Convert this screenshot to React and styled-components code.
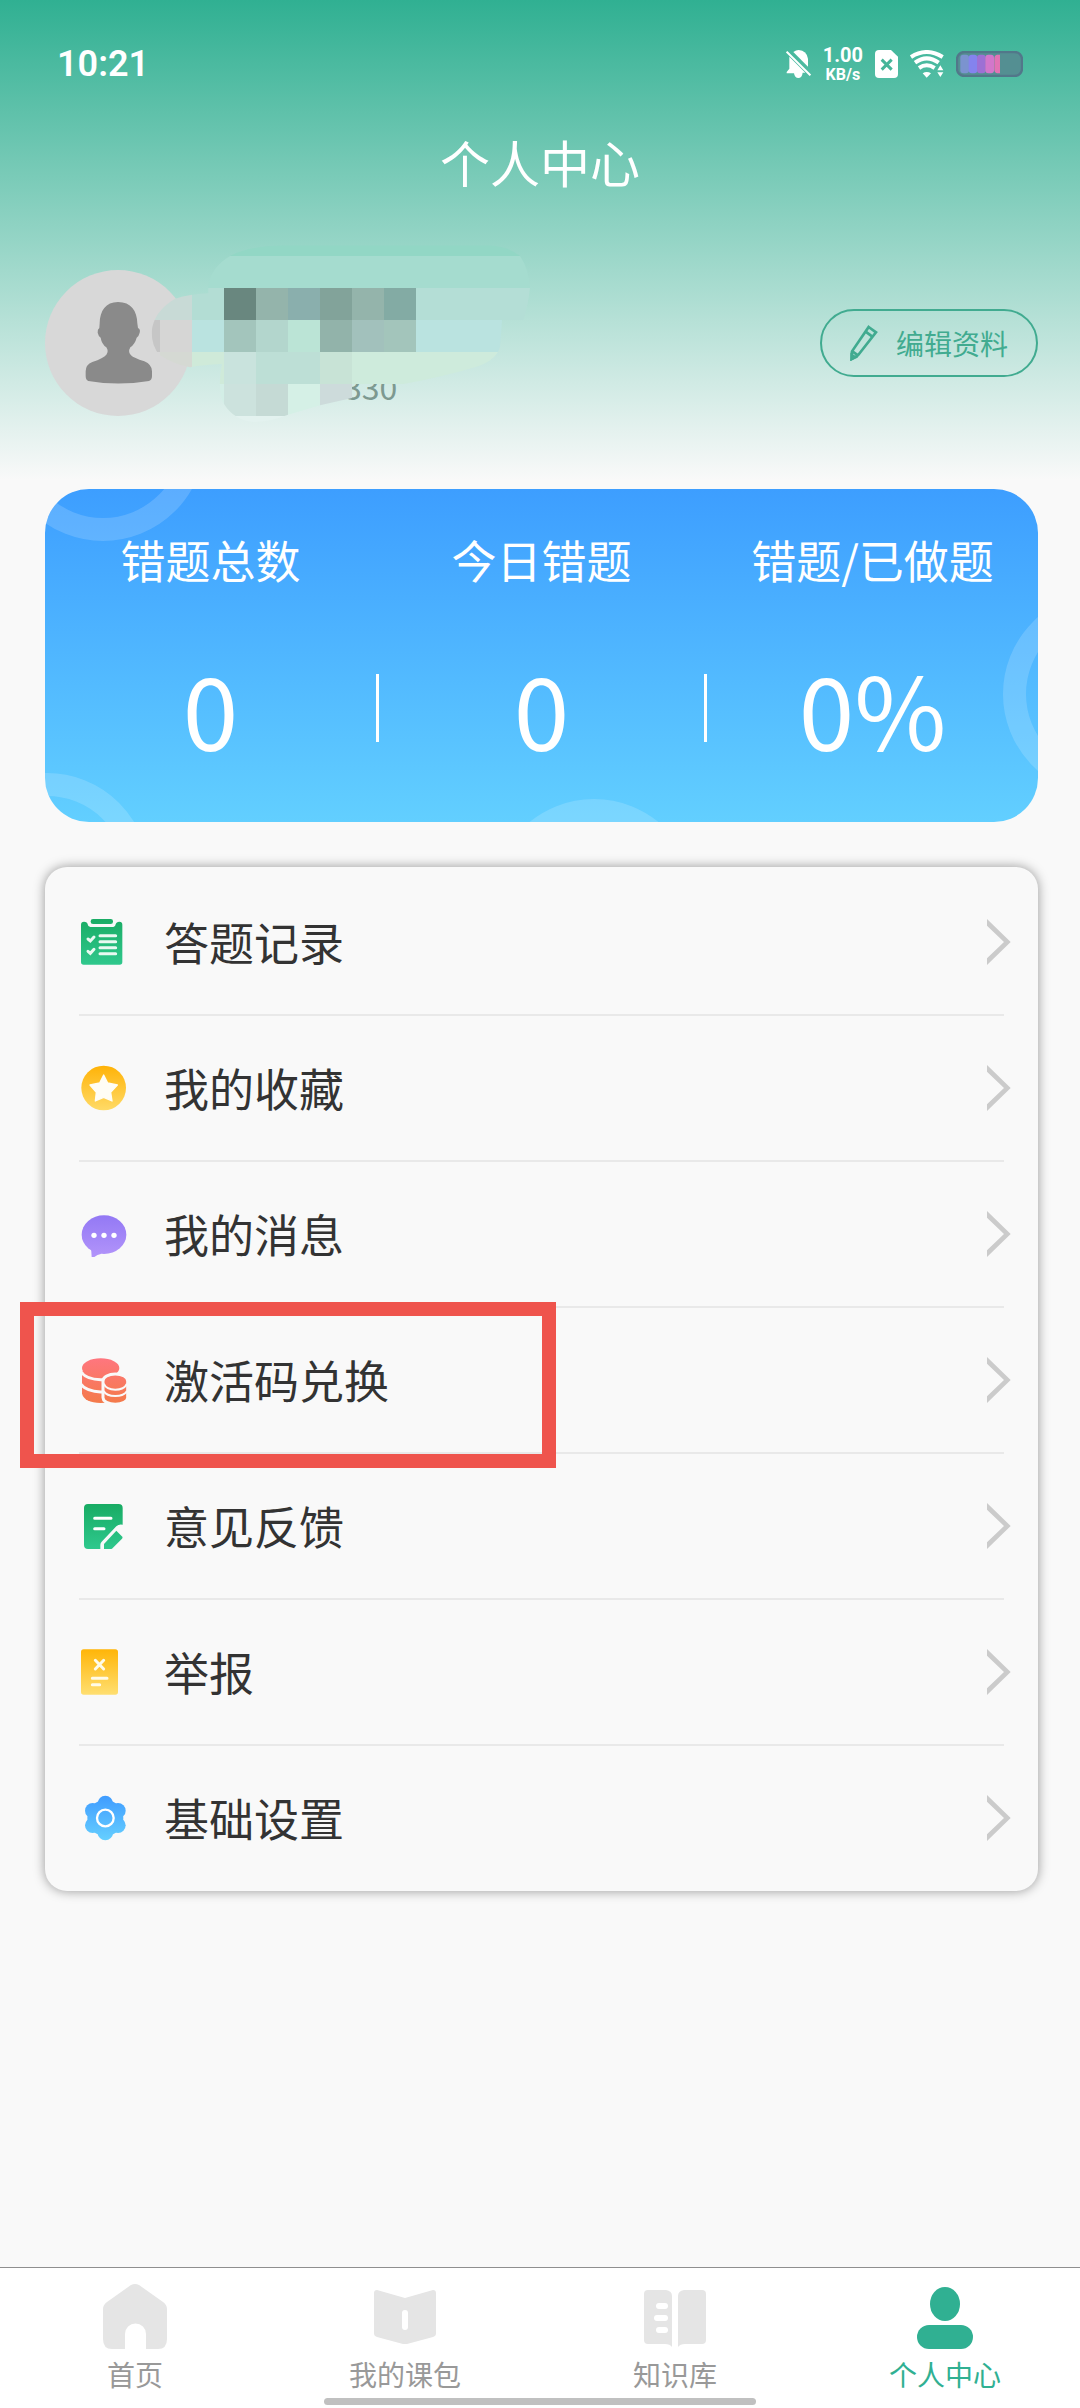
import React from "react";
import styled, { createGlobalStyle } from "styled-components";

const GlobalStyle = createGlobalStyle`
  * {
    box-sizing: border-box;
  }

  body {
    margin: 0;
    background: #f9f9f9;
    color: #333;
    font-family: "Noto Sans CJK SC", "Noto Sans", sans-serif;
  }
`;

const Page = styled.div`
  min-height: 100vh;
  display: flex;
  flex-direction: column;
  background: linear-gradient(#30b092, #f9f9f9 480px) #f9f9f9;
`;

const StatusBar = styled.div`
  height: 128px;
  padding: 0 57px;
  display: flex;
  align-items: center;
  justify-content: space-between;
  color: #fff;
  font-family: Roboto, sans-serif;
`;

const Time = styled.span`
  font-size: 36px;
  line-height: 48px;
  font-weight: 600;
`;

const StatusIcons = styled.div`
  display: flex;
  align-items: center;
  gap: 12px;
`;

const Speed = styled.span`
  font-size: 20px;
  font-weight: 700;
  line-height: 22px;
  text-align: center;

  small {
    display: block;
    font-size: 16px;
    line-height: 18px;
  }
`;

const Title = styled.h1`
  margin: 0;
  font-size: 50px;
  font-weight: 400;
  line-height: 66px;
  text-align: center;
  color: #fff;
`;

const Profile = styled.section`
  position: relative;
  display: flex;
  align-items: center;
  justify-content: space-between;
  margin: 76px 42px 73px 45px;
`;

const Avatar = styled.div`
  width: 146px;
  height: 146px;
  border-radius: 50%;
  background: #d8d8d8;

  svg {
    display: block;
  }
`;

const UserId = styled.span`
  flex: 1;
  padding: 86px 0 0 153px;
  font-size: 32px;
  line-height: 48px;
  color: #7d9990;
`;

const Smudge = styled.svg`
  position: absolute;
  left: -15px;
  top: -30px;
`;

const EditButton = styled.button`
  width: 218px;
  height: 68px;
  padding: 0 28px;
  display: flex;
  align-items: center;
  justify-content: space-between;
  border: 2px solid #41ab90;
  border-radius: 34px;
  background: transparent;
  color: #41ab90;
  font-family: inherit;
  font-size: 28px;
  line-height: 40px;
`;

const StatCard = styled.section`
  position: relative;
  overflow: hidden;
  margin: 0 42px 45px 45px;
  padding: 39px 0 62px;
  display: grid;
  grid-template-columns: repeat(3, 1fr);
  border-radius: 44px;
  background: linear-gradient(#3d9eff, #62cfff);
  color: #fff;
  text-align: center;
`;

const Ring = styled.span`
  position: absolute;
  left: ${(props) => props.$left};
  top: ${(props) => props.$top};
  width: 204px;
  height: 204px;
  border: 23px solid rgba(255, 255, 255, 0.16);
  border-radius: 50%;
`;

const Stat = styled.div`
  position: relative;
`;

const StatLabel = styled.div`
  margin-bottom: 64px;
  font-size: 45px;
  line-height: 64px;
`;

const StatValue = styled.div`
  height: 104px;
  display: flex;
  align-items: center;
  justify-content: center;
  font-size: 100px;
  line-height: 104px;

  &:before,
  &:after {
    content: "";
    width: 3px;
    height: 68px;
    background: ${(props) => (props.$divided ? "#fff" : "transparent")};
  }

  span {
    flex: 1;
  }
`;

const Menu = styled.ul`
  margin: 0 42px 45px 45px;
  padding: 3px 0 1px;
  list-style: none;
  border-radius: 22px;
  background: #f9f9f9;
  box-shadow: 0 0 12px rgba(0, 0, 0, 0.4);
`;

const MenuItem = styled.li`
  position: relative;

  &:after {
    content: "";
    display: block;
    height: 2px;
    margin: 0 34px;
    background: #e9e9e9;
  }

  &:last-child:after {
    display: none;
  }
`;

const MenuLink = styled.a`
  height: 144px;
  padding: 0 27px 0 36px;
  display: flex;
  align-items: center;
  color: inherit;
  font-size: 45px;
  line-height: 64px;
  text-decoration: none;

  span {
    flex: 1;
    margin-left: 37px;
  }
`;

const Highlight = styled.div`
  position: absolute;
  left: -25px;
  top: -6px;
  width: 536px;
  height: 166px;
  border: 14px solid #ef544d;
  z-index: 1;
  pointer-events: none;
`;

const TabBar = styled.nav`
  margin-top: auto;
  padding-bottom: 3px;
  border-top: 1px solid #8f8f8f;
  background: #fff;
`;

const Tabs = styled.div`
  display: grid;
  grid-template-columns: repeat(4, 1fr);
`;

const Tab = styled.a`
  padding-top: 16px;
  display: flex;
  flex-direction: column;
  align-items: center;
  color: ${(props) => (props.$active ? "#30b092" : "#999")};
  font-size: 28px;
  line-height: 40px;
  text-decoration: none;

  svg {
    margin-bottom: 4px;
    fill: ${(props) => (props.$active ? "#30b092" : "#e5e5e5")};
  }
`;

const HomeIndicator = styled.div`
  width: 40%;
  height: 7px;
  margin: 4px auto 0;
  border-radius: 4px;
  background: #c0c0c0;
`;

const BellOffIcon = () => (
  <svg width="25" height="28" viewBox="0 0 75 84" fill="#fff">
    <path d="M22 6Q30 0 38 0Q62 2 66 26V50L22 6Z" />
    <path d="M10 20L58 68H50Q48 84 37 84Q26 84 24 70H2V66L10 56Z" />
    <path d="M2 5L73 76" stroke="#fff" strokeWidth="6" />
  </svg>
);

const SimOffIcon = () => (
  <svg width="23" height="28" viewBox="0 0 69 84">
    <path d="M12 0H48L69 20V72Q69 84 57 84H12Q0 84 0 72V12Q0 0 12 0Z" fill="#fff" />
    <path d="M20 29L50 59M50 29L20 59" stroke="#45b599" strokeWidth="9" />
  </svg>
);

const WifiIcon = () => (
  <svg width="34" height="28" viewBox="0 0 102 84" fill="none" stroke="#fff" strokeWidth="12">
    <path d="M3 21Q50 -9 98 21" />
    <path d="M15 38Q50 12 86 38" />
    <path d="M27 54Q50 38 74 54" />
    <path d="M38 70Q50 62 63 70L50 83Z" fill="#fff" stroke="none" />
    <path d="M82 61L91 46L100 61ZM82 67L91 81L100 67Z" fill="#fff" stroke="none" />
  </svg>
);

const BatteryIcon = () => (
  <svg width="67" height="26" viewBox="0 0 201 78">
    <rect x="3" y="3" width="195" height="72" rx="22" fill="#548f92" stroke="#52778a" strokeWidth="7" />
    <rect x="13" y="11" width="26" height="56" rx="9" fill="#7b93cf" />
    <rect x="38" y="11" width="26" height="56" rx="9" fill="#8483ee" />
    <rect x="63" y="11" width="26" height="56" rx="9" fill="#9d70d4" />
    <rect x="88" y="11" width="26" height="56" rx="9" fill="#d277cb" />
    <path d="M123 11h9v56h-9q-8-2-8-12V23q0-10 8-12z" fill="#e273b4" />
  </svg>
);

const PersonIcon = () => (
  <svg width="146" height="146" viewBox="0 0 438 438" fill="#8a8a8a">
    <path d="M219 96C258 96 276 122 277 160L279 174Q287 178 284 188Q281 200 275 203Q270 222 256 232Q248 246 258 256Q266 264 298 274Q321 284 321 304V318Q321 330 312 333Q219 348 130 333Q122 330 122 318V304Q122 284 142 276Q176 264 184 254Q192 244 184 232Q170 222 167 203Q160 198 158 188Q157 178 163 174L164 160C165 122 182 96 219 96Z" />
  </svg>
);

const PencilIcon = () => (
  <svg width="28" height="36" viewBox="0 0 84 108" fill="none" stroke="#41ab90" strokeWidth="8">
    <path d="M56 6L78 22L24 91L5 102L6 79Z" />
    <path d="M47 20L67 35M7 79L24 91" />
    <path d="M5 90L16 97L5 102Z" fill="#41ab90" />
  </svg>
);

// [x, y, width, colour] of each mosaic block, one block is 96 high
const blocks = [
  [500, -48, 1060, "#92d7c5"],
  [500, 48, 1060, "#a5dccf"],
  [300, 144, 90, "#c8dad6"],
  [390, 144, 96, "#c8dad6"],
  [486, 144, 96, "#b3ddd4"],
  [582, 144, 96, "#69877f"],
  [678, 144, 96, "#94b4ab"],
  [774, 144, 96, "#8aafad"],
  [870, 144, 96, "#82a39a"],
  [966, 144, 96, "#94b4ab"],
  [1062, 144, 96, "#83aba4"],
  [1158, 144, 400, "#b4ded6"],
  [300, 240, 90, "#c6c6c6"],
  [390, 240, 96, "#d6d6d5"],
  [486, 240, 96, "#bae3e0"],
  [582, 240, 96, "#a3c5bc"],
  [678, 240, 96, "#b3d6cd"],
  [774, 240, 96, "#bbe4d6"],
  [870, 240, 96, "#92b3aa"],
  [966, 240, 96, "#a2c1bc"],
  [1062, 240, 96, "#a3c5bb"],
  [1158, 240, 400, "#bae3e0"],
  [390, 336, 96, "#d5d9d3"],
  [486, 336, 96, "#cfead9"],
  [582, 336, 96, "#c9e3dd"],
  [678, 336, 192, "#bddfd6"],
  [870, 336, 96, "#c8e3d6"],
  [966, 336, 594, "#ceebdc"],
  [486, 432, 96, "#d3eee6"],
  [582, 432, 96, "#cce2dd"],
  [678, 432, 96, "#c5dad5"],
  [774, 432, 96, "#d5f0e6"],
  [870, 432, 96, "#cddbdb"],
  [486, 528, 400, "#e3f2ef"],
];

const NameSmudge = () => (
  <Smudge width="520" height="200" viewBox="0 0 1560 600" shapeRendering="crispEdges" aria-hidden="true">
    <clipPath id="smudge">
      <path d="M365 275Q370 215 435 176Q480 162 535 160Q530 90 600 48Q650 20 760 16H1380Q1440 22 1470 48Q1496 84 1500 144Q1494 200 1480 240H1416L1410 320Q1400 360 1340 380Q1240 410 1100 436L966 474L870 496L774 524Q720 546 670 546Q612 540 582 492Q560 450 576 372Q520 374 480 382Q430 372 390 346Q365 320 365 275Z" />
    </clipPath>
    <g clipPath="url(#smudge)">
      {blocks.map(([x, y, width, fill]) => (
        <rect key={`${x}-${y}`} x={x} y={y} width={width} height="96" fill={fill} />
      ))}
    </g>
  </Smudge>
);

const MenuIcon = ({ id, from, to, children }) => (
  <svg width="46" height="46" viewBox="0 0 138 138">
    <linearGradient id={id} gradientUnits="userSpaceOnUse" x1="0" y1="0" x2="0" y2="138">
      <stop stopColor={from} />
      <stop offset="1" stopColor={to} />
    </linearGradient>
    <g fill={`url(#${id})`}>{children}</g>
  </svg>
);

const RecordIcon = () => (
  <MenuIcon id="record" from="#1aac65" to="#30c88d">
    <rect x="29" y="0" width="67" height="15" rx="7" />
    <path d="M0 17Q0 8 9 8Q19 8 20 16Q21 24 28 24H97Q103 24 104 16Q106 8 115 8Q124 8 124 17V129Q124 137 116 137H8Q0 137 0 129Z" />
    <path
      d="M57 50H104M57 68H104M57 86H104M57 104H104M21 60L28 66L39 54M21 97L28 103L39 91"
      fill="none"
      stroke="#e9f9f1"
      strokeWidth="9"
      strokeLinecap="round"
    />
  </MenuIcon>
);

const StarIcon = () => (
  <MenuIcon id="star" from="#ffb206" to="#ffdb68">
    <circle cx="68" cy="69" r="67" />
    <path
      d="M68 30L80 54L109 60L89 82L93 108L68 97L43 108L46 82L27 60L56 54Z"
      fill="#fffdf5"
      stroke="#fffdf5"
      strokeWidth="4"
      strokeLinejoin="round"
    />
  </MenuIcon>
);

const MessageIcon = () => (
  <MenuIcon id="message" from="#9076f4" to="#b294fa">
    <ellipse cx="69" cy="71" rx="67" ry="58" />
    <path d="M30 108L32 138Q36 142 40 138Q48 130 62 128Z" />
    <g fill="#fff">
      <circle cx="39" cy="73" r="8" />
      <circle cx="69" cy="73" r="8" />
      <circle cx="99" cy="73" r="8" />
    </g>
  </MenuIcon>
);

const CoinsIcon = () => (
  <MenuIcon id="coins" from="#ff7680" to="#f47a4a">
    <path d="M3 42H85V136Q72 138 59 138Q10 136 3 110Z" />
    <ellipse cx="59" cy="33" rx="56" ry="29" />
    <path
      d="M-2 42Q14 68 59 68H90M-2 80Q14 103 59 105H90"
      fill="none"
      stroke="#f9f9f9"
      strokeWidth="9"
    />
    <path
      d="M66 72A37 21 0 0 1 140 72V122A37 20 0 0 1 66 122Z"
      stroke="#f9f9f9"
      strokeWidth="9"
    />
    <path
      d="M68 80Q76 98 103 98Q130 98 138 80M68 102Q76 117 103 117Q130 117 138 102"
      fill="none"
      stroke="#f9f9f9"
      strokeWidth="6"
    />
  </MenuIcon>
);

const FeedbackIcon = () => (
  <MenuIcon id="feedback" from="#18ab63" to="#2fc88d">
    <path d="M21 3H113Q125 3 125 15V65Q114 62 106 70L62 116Q58 120 58 126V138H21Q9 138 9 126V15Q9 3 21 3Z" />
    <path d="M106 83L124 101Q126 104 123 107L93 137Q91 138 88 138H69V123Z" />
    <path d="M41 46H90M41 77H69" stroke="#fff" strokeWidth="9" strokeLinecap="round" />
  </MenuIcon>
);

const ReportIcon = () => (
  <MenuIcon id="report" from="#ffb507" to="#ffdf72">
    <rect x="0" y="1" width="111" height="136" rx="8" />
    <path
      d="M43 34L68 60M68 34L43 60M34 88H78M34 107H56"
      stroke="#fffbe9"
      strokeWidth="9"
      strokeLinecap="round"
    />
  </MenuIcon>
);

const SettingsIcon = () => (
  <MenuIcon id="settings" from="#3f9bff" to="#66d0ff">
    <circle cx="73" cy="69" r="54" />
    <circle cx="73" cy="25" r="23" />
    <circle cx="111" cy="47" r="23" />
    <circle cx="111" cy="91" r="23" />
    <circle cx="73" cy="113" r="23" />
    <circle cx="35" cy="91" r="23" />
    <circle cx="35" cy="47" r="23" />
    <circle cx="73" cy="69" r="25" fill="none" stroke="#fff" strokeWidth="7" />
  </MenuIcon>
);

const ChevronIcon = () => (
  <svg width="24" height="46" viewBox="0 0 72 138" fill="#cbcbcb">
    <path d="M0 0L71 69L0 138V118L51 69L0 20Z" />
  </svg>
);

const HomeIcon = () => (
  <svg width="64" height="66">
    <path d="M28 1Q32 -1 36 1L60 18Q64 21 64 25V55Q64 65 55 65H43V50A10 10 0 0 0 22 50V65H9Q0 65 0 55V25Q0 21 4 18Z" />
  </svg>
);

const CourseIcon = () => (
  <svg width="64" height="66">
    <path d="M4 6L32 14L60 6Q63 6 63 9V50Q63 52 60 53L34 60Q32 60 30 60L4 53Q1 52 1 50V9Q1 6 4 6Z" />
    <rect x="29" y="26" width="6" height="20" rx="3" fill="#fff" />
  </svg>
);

const LibraryIcon = () => (
  <svg width="64" height="66">
    <path d="M5 6H23Q29 7 29 12V63Q27 60 22 60H5Q1 60 1 56V10Q1 6 5 6Z" />
    <path d="M59 6H41Q35 7 35 12V63Q37 60 42 60H59Q63 60 63 56V10Q63 6 59 6Z" />
    <g fill="#fff">
      <rect x="13" y="19" width="12" height="6" rx="3" />
      <rect x="11" y="31" width="14" height="6" rx="3" />
      <rect x="13" y="43" width="12" height="6" rx="3" />
    </g>
  </svg>
);

const MineIcon = () => (
  <svg width="64" height="66">
    <ellipse cx="32" cy="20" rx="15" ry="17" />
    <rect x="4" y="41" width="56" height="24" rx="12" />
  </svg>
);

const stats = [
  { label: "错题总数", value: "0" },
  { label: "今日错题", value: "0", divided: true },
  { label: "错题/已做题", value: "0%" },
];

const menu = [
  { label: "答题记录", Icon: RecordIcon },
  { label: "我的收藏", Icon: StarIcon },
  { label: "我的消息", Icon: MessageIcon },
  { label: "激活码兑换", Icon: CoinsIcon, highlighted: true },
  { label: "意见反馈", Icon: FeedbackIcon },
  { label: "举报", Icon: ReportIcon },
  { label: "基础设置", Icon: SettingsIcon },
];

const tabs = [
  { label: "首页", Icon: HomeIcon },
  { label: "我的课包", Icon: CourseIcon },
  { label: "知识库", Icon: LibraryIcon },
  { label: "个人中心", Icon: MineIcon, active: true },
];

function App() {
  return (
    <Page>
      <GlobalStyle />
      <StatusBar>
        <Time>10:21</Time>
        <StatusIcons>
          <BellOffIcon />
          <Speed>
            1.00
            <small>KB/s</small>
          </Speed>
          <SimOffIcon />
          <WifiIcon />
          <BatteryIcon />
        </StatusIcons>
      </StatusBar>
      <Title>个人中心</Title>
      <Profile>
        <Avatar>
          <PersonIcon />
        </Avatar>
        <UserId>330</UserId>
        <NameSmudge />
        <EditButton type="button">
          <PencilIcon />
          编辑资料
        </EditButton>
      </Profile>
      <StatCard>
        <Ring $left="-44px" $top="-152px" />
        <Ring $left="-100px" $top="284px" />
        <Ring $left="calc(50% - 50px)" $top="310px" />
        <Ring $left="calc(100% - 35px)" $top="103px" />
        {stats.map(({ label, value, divided }) => (
          <Stat key={label}>
            <StatLabel>{label}</StatLabel>
            <StatValue $divided={divided}>
              <span>{value}</span>
            </StatValue>
          </Stat>
        ))}
      </StatCard>
      <Menu>
        {menu.map(({ label, Icon, highlighted }) => (
          <MenuItem key={label}>
            <MenuLink href="#">
              <Icon />
              <span>{label}</span>
              <ChevronIcon />
            </MenuLink>
            {highlighted && <Highlight />}
          </MenuItem>
        ))}
      </Menu>
      <TabBar>
        <Tabs>
          {tabs.map(({ label, Icon, active }) => (
            <Tab key={label} href="#" $active={active}>
              <Icon />
              {label}
            </Tab>
          ))}
        </Tabs>
        <HomeIndicator />
      </TabBar>
    </Page>
  );
}

export default App;
